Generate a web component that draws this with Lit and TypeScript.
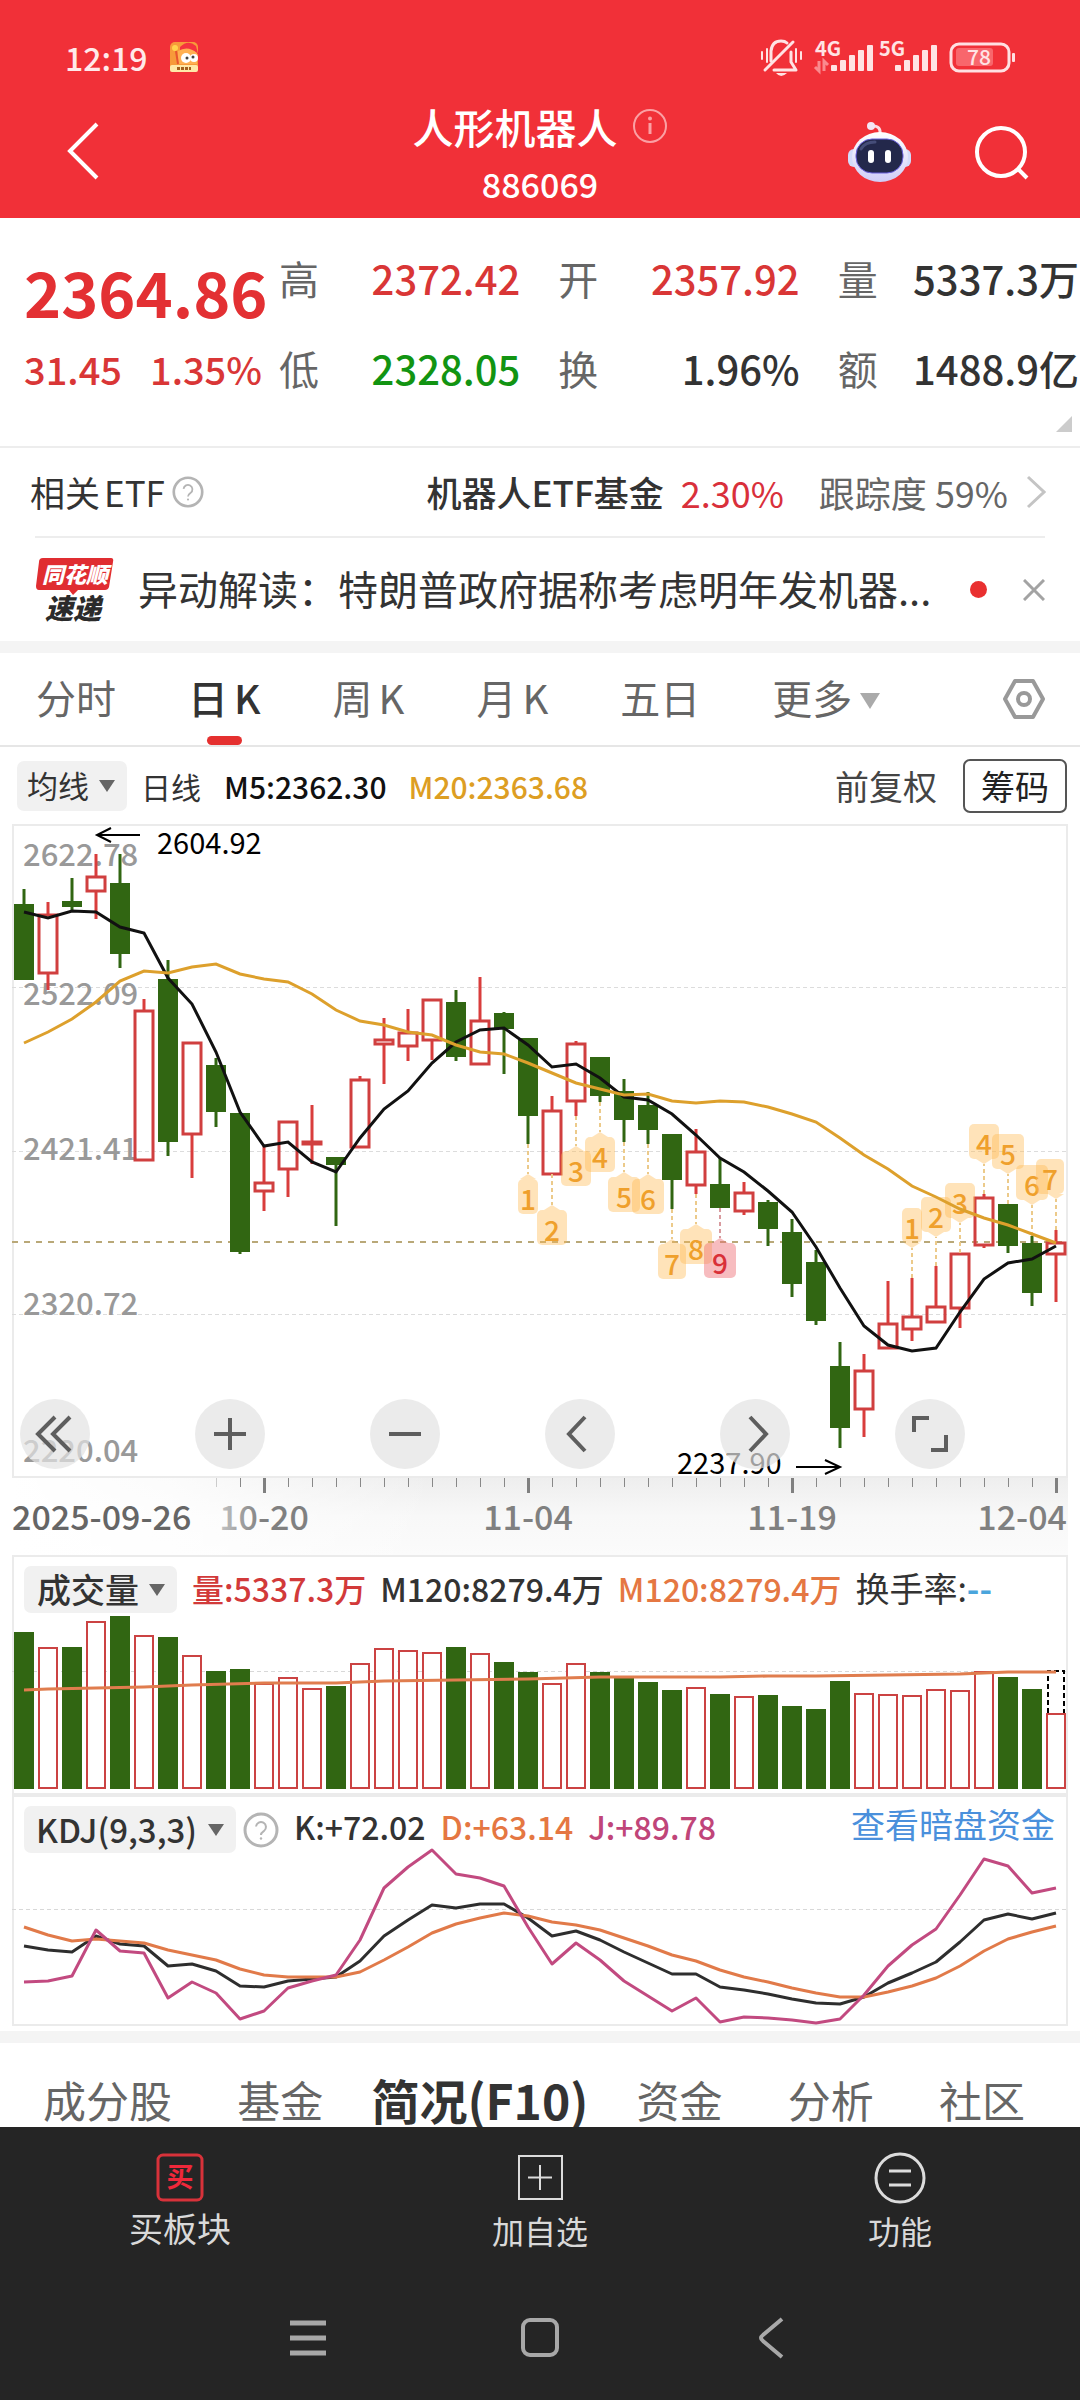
import { LitElement, html, svg, css } from "lit";
import { customElement, property } from "lit/decorators.js";
import { classMap } from "lit/directives/class-map.js";

const FONT = css`"Noto Sans CJK SC", "Noto Sans", sans-serif`;

/** Horizontal distance between two trading days, and the centre of the first one. */
const STEP = 24;
const FIRST = 24;
const dayX = (i: number) => FIRST + i * STEP;

type Candle = [up: 0 | 1, high: number, top: number, bottom: number, low: number];

const candles: Candle[] = [
  [0, 889, 904, 980, 980], [1, 902, 914, 973, 990], [0, 878, 901, 907, 912], [1, 854, 876, 891, 919],
  [0, 854, 883, 954, 968], [1, 999, 1010, 1160, 1160], [0, 960, 979, 1142, 1156], [1, 1042, 1042, 1134, 1178],
  [0, 1058, 1065, 1112, 1127], [0, 1113, 1113, 1252, 1254], [1, 1146, 1182, 1191, 1211], [1, 1121, 1121, 1169, 1197],
  [1, 1105, 1141, 1144, 1164], [0, 1157, 1157, 1165, 1226], [1, 1076, 1079, 1147, 1147], [1, 1018, 1039, 1044, 1084],
  [1, 1009, 1032, 1046, 1061], [1, 999, 999, 1040, 1060], [0, 990, 1002, 1057, 1061], [1, 977, 1020, 1064, 1064],
  [0, 1012, 1013, 1029, 1074], [0, 1038, 1038, 1116, 1144], [1, 1096, 1110, 1174, 1174], [1, 1041, 1043, 1101, 1116],
  [0, 1057, 1057, 1096, 1102], [0, 1079, 1091, 1120, 1142], [0, 1092, 1105, 1130, 1144], [0, 1134, 1134, 1180, 1209],
  [1, 1129, 1151, 1185, 1194], [0, 1158, 1184, 1208, 1208], [1, 1182, 1192, 1211, 1215], [0, 1200, 1202, 1229, 1246],
  [0, 1219, 1232, 1284, 1297], [0, 1250, 1262, 1321, 1325], [0, 1342, 1366, 1428, 1448], [1, 1354, 1370, 1409, 1437],
  [1, 1281, 1323, 1348, 1348], [1, 1278, 1316, 1329, 1341], [1, 1266, 1306, 1322, 1322], [1, 1253, 1253, 1308, 1328],
  [1, 1194, 1197, 1245, 1248], [0, 1204, 1204, 1246, 1253], [0, 1236, 1243, 1293, 1306], [1, 1230, 1242, 1254, 1302],
];

const ma5 = [912, 918, 911, 912, 927, 933, 978, 1004, 1052, 1112, 1146, 1142, 1162, 1172, 1138, 1109, 1091, 1063, 1042, 1030, 1028, 1045, 1067, 1064, 1078, 1097, 1100, 1114, 1135, 1158, 1172, 1191, 1212, 1247, 1288, 1326, 1345, 1351, 1348, 1312, 1279, 1263, 1259, 1246];
const ma20 = [1043, 1032, 1019, 1002, 981, 971, 973, 967, 964, 974, 979, 982, 994, 1010, 1021, 1025, 1032, 1035, 1045, 1052, 1054, 1063, 1073, 1083, 1089, 1095, 1094, 1101, 1103, 1101, 1102, 1107, 1114, 1122, 1138, 1155, 1169, 1186, 1197, 1209, 1218, 1225, 1234, 1243];

/** Numbered turn marks: label, day index, y of the tip, tag width, side of the candle. */
type Mark = { n: number; day: number; tip: number; w: number; below: boolean };
const marks: Mark[] = [
  { n: 1, day: 21, tip: 1174, w: 20, below: true },
  { n: 2, day: 22, tip: 1205, w: 30, below: true },
  { n: 3, day: 23, tip: 1146, w: 30, below: true },
  { n: 4, day: 24, tip: 1132, w: 30, below: true },
  { n: 5, day: 25, tip: 1172, w: 32, below: true },
  { n: 6, day: 26, tip: 1174, w: 32, below: true },
  { n: 7, day: 27, tip: 1239, w: 28, below: true },
  { n: 8, day: 28, tip: 1224, w: 32, below: true },
  { n: 9, day: 29, tip: 1238, w: 32, below: true },
  { n: 1, day: 37, tip: 1248, w: 20, below: false },
  { n: 2, day: 38, tip: 1237, w: 30, below: false },
  { n: 3, day: 39, tip: 1223, w: 30, below: false },
  { n: 4, day: 40, tip: 1164, w: 30, below: false },
  { n: 5, day: 41, tip: 1174, w: 32, below: false },
  { n: 6, day: 42, tip: 1205, w: 32, below: false },
  { n: 7, day: 43, tip: 1199, w: 28, below: false },
];

const volumeTops = [1632, 1647, 1647, 1621, 1616, 1635, 1637, 1655, 1671, 1669, 1683, 1677, 1688, 1686, 1663, 1648, 1650, 1652, 1647, 1653, 1662, 1672, 1683, 1663, 1672, 1677, 1682, 1690, 1687, 1694, 1696, 1695, 1706, 1709, 1681, 1693, 1694, 1695, 1689, 1690, 1671, 1677, 1689, 1713];
const volumeAverage: [number, number][] = [[0, 1690], [1, 1689], [3, 1688], [5, 1687], [7, 1685], [10, 1683], [13, 1683], [15, 1681], [18, 1680], [21, 1679], [24, 1677], [27, 1677], [29, 1677], [31, 1676], [33, 1676], [36, 1675], [39, 1674], [41, 1672], [43, 1672]];

const kLine = [1946, 1950, 1952, 1936, 1944, 1946, 1966, 1964, 1971, 1986, 1987, 1981, 1979, 1977, 1961, 1936, 1920, 1905, 1908, 1904, 1904, 1918, 1936, 1931, 1940, 1952, 1963, 1974, 1974, 1987, 1990, 1994, 1999, 2003, 2004, 1997, 1983, 1973, 1962, 1942, 1920, 1914, 1919, 1913];
const dLine = [1927, 1935, 1941, 1939, 1941, 1943, 1950, 1955, 1960, 1969, 1975, 1977, 1977, 1977, 1972, 1960, 1947, 1933, 1924, 1918, 1913, 1916, 1922, 1925, 1930, 1938, 1946, 1955, 1961, 1970, 1977, 1982, 1988, 1993, 1997, 1997, 1992, 1986, 1978, 1966, 1951, 1939, 1932, 1926];
const jLine = [1982, 1981, 1976, 1930, 1951, 1953, 1998, 1982, 1993, 2019, 2011, 1988, 1981, 1975, 1940, 1888, 1867, 1850, 1874, 1878, 1886, 1927, 1964, 1943, 1960, 1981, 1996, 2011, 1998, 2022, 2017, 2018, 2020, 2023, 2019, 1995, 1966, 1945, 1929, 1895, 1859, 1866, 1893, 1888];

const points = (ys: number[]) => ys.map((y, i) => `${dayX(i)},${y}`).join(" ");

const caret = (w: number, h: number) => html`<svg class="caret" width=${w} height=${h} viewBox="0 0 16 12" preserveAspectRatio="none" aria-hidden="true"><path d="M0 0H16L8 12Z" fill="currentColor" /></svg>`;

const help = (size: number) => html`<svg width=${size} height=${size} viewBox="0 0 36 36" fill="none" stroke="#b4b4b4" stroke-width="3" aria-hidden="true">
  <circle cx="18" cy="18" r="16" /><path d="M13 14.500a5 5 0 1 1 8 4.500c-2 1.400-3 2-3 4" stroke-width="2" /><circle cx="18" cy="26.500" r="1.200" fill="#b4b4b4" stroke="none" /></svg>`;

@customElement("status-bar")
export class StatusBar extends LitElement {
  static styles = css`
    :host { display: block; font-family: ${FONT}; color: #fff; }
    .bar { display: flex; align-items: center; height: 34px; padding: 40px 62px 8px 65px; }
    .time { font-size: 32px; line-height: 34px; font-weight: 500; color: #ffe9ea; }
    .app { margin-left: 22px; }
    .right { margin-left: auto; }
    .signal { font-size: 20px; font-weight: 700; fill: #ffe3e4; }
    svg { display: block; }
  `;

  private signal(label: string, x: number) {
    return svg`<text class="signal" x=${x} y="21">${label}</text>
      ${[0, 1, 2, 3, 4].map((i) => svg`<rect x=${x + 16 + i * 9} y=${30 - i * 5} width="6" height=${6 + i * 5} rx="1" fill="#ffe3e4" />`)}`;
  }

  render() {
    return html`<div class="bar">
      <span class="time">12:19</span>
      <svg class="app" width="28" height="30" viewBox="0 0 28 30" aria-hidden="true">
        <rect width="28" height="30" rx="5" fill="#f79a3a" />
        <path d="M10 5Q18-3 26 4L28 12H10Z" fill="#f5333f" />
        <path d="M8 9Q18 3 27 11V22H8Z" fill="#ffb052" />
        <circle cx="5" cy="6" r="3" fill="#ffd34d" /><path d="M6 9L8 22" stroke="#e8562f" stroke-width="2" />
        <circle cx="16" cy="16" r="5" fill="#fff" /><circle cx="24" cy="16" r="4" fill="#fff" />
        <circle cx="17" cy="16" r="1.500" fill="#444" /><circle cx="23" cy="15" r="1.500" fill="#444" />
        <rect y="23" width="28" height="7" rx="2" fill="#ffe9a8" /><path d="M7 26.500H21" stroke="#a2601e" stroke-width="3" stroke-dasharray="3 1" />
      </svg>
      <svg class="right" width="258" height="56" viewBox="0 -6 258 56" fill="none" role="img" aria-label="静音，4G，5G，电量">
        <g stroke="#ffe3e4" stroke-width="3" stroke-linecap="round" stroke-linejoin="round">
          <path d="M2 17V24M7 14V27M36 14V27M41 17V24" stroke-width="2" />
          <path d="M11 26V16Q12 6 21 6Q25 6 27 8" />
          <path d="M31 17V27L36 35H14" />
          <path d="M5 35L33 7" />
        </g>
        <path d="M16 38H27Q21 44 16 38Z" fill="#ffe3e4" />
        ${this.signal("4G", 55)}
        <path d="M59 26V36L55 32M64 36V26L68 30" stroke="#fa8a8e" stroke-width="3" />
        ${this.signal("5G", 119)}
        <rect x="191" y="9" width="58" height="27" rx="8" stroke="#ffe0e2" stroke-width="3" />
        <rect x="196" y="13" width="37" height="18" rx="3" fill="#f8666c" />
        <text x="219" y="30" text-anchor="middle" font-size="21" font-weight="500" fill="#ffe3e4">78</text>
        <rect x="252" y="18" width="3" height="9" rx="1" fill="#ffe0e2" />
      </svg>
    </div>`;
  }
}

@customElement("title-bar")
export class TitleBar extends LitElement {
  static styles = css`
    :host { display: block; font-family: ${FONT}; color: #fff; }
    .bar { display: grid; grid-template-columns: 1fr auto 1fr; align-items: center; height: 136px; padding: 0 46px; box-sizing: border-box; }
    button { background: none; border: 0; padding: 0; color: inherit; display: block; }
    .back { margin-left: 10px; }
    .mid { display: flex; flex-direction: column; align-items: center; padding-top: 8px; }
    h1 { margin: 0; font-size: 41px; line-height: 60px; font-weight: 500; display: flex; align-items: center; gap: 14px; }
    .code { font-size: 34px; line-height: 56px; font-weight: 500; }
    .side { display: flex; justify-content: flex-end; align-items: center; gap: 59px; padding-top: 4px; }
    svg { display: block; }
  `;

  render() {
    return html`<div class="bar">
      <button class="back" aria-label="返回"><svg width="54" height="60" viewBox="0 0 54 60"><path d="M41 4L14 31L41 58" fill="none" stroke="#fff" stroke-width="4" /></svg></button>
      <div class="mid">
        <h1><span>人形机器人</span><button aria-label="说明"><svg width="36" height="36" viewBox="0 0 36 36" fill="none" stroke="#fba0a4" stroke-width="2">
          <circle cx="18" cy="18" r="16" /><path d="M18 15V26" stroke-width="3" /><circle cx="18" cy="10.500" r="1" /></svg></button></h1>
        <span class="code">886069</span>
      </div>
      <div class="side">
        <button aria-label="智能助手"><svg width="66" height="62" viewBox="0 0 66 62">
          <defs><linearGradient id="shell" x1="0" y1="0" x2="0" y2="1"><stop offset="0" stop-color="#fff" /><stop offset="1" stop-color="#cfcdf7" /></linearGradient></defs>
          <path d="M33 13Q34 5 26 5" fill="none" stroke="#fbdde6" stroke-width="3" /><circle cx="24" cy="5" r="4" fill="#f4e6f5" />
          <rect x="1" y="28" width="12" height="18" rx="6" fill="#d3dbfa" /><rect x="52" y="28" width="12" height="18" rx="6" fill="#d3dbfa" />
          <ellipse cx="33" cy="36" rx="28" ry="25" fill="url(#shell)" />
          <rect x="9" y="18" width="47" height="34" rx="16" fill="#23284b" stroke="#6a61dd" stroke-width="1" />
          <path d="M14 28Q18 21 28 21" stroke="#454d78" stroke-width="3" fill="none" stroke-linecap="round" />
          <rect x="21" y="29" width="6" height="13" rx="3" fill="#fff" /><rect x="38" y="29" width="6" height="13" rx="3" fill="#fff" />
        </svg></button>
        <button aria-label="搜索"><svg width="62" height="62" viewBox="0 0 62 62" fill="none" stroke="#fff" stroke-width="4"><circle cx="29" cy="31" r="24" /><path d="M45 47L55 57" /></svg></button>
      </div>
    </div>`;
  }
}

@customElement("quote-panel")
export class QuotePanel extends LitElement {
  static styles = css`
    :host { display: block; font-family: ${FONT}; color: #333; }
    .panel { display: grid; grid-template-columns: 217px repeat(3, 1fr); column-gap: 38px; height: 230px; box-sizing: border-box; padding: 30px 1px 0 24px; border-bottom: 2px solid #ededed; position: relative; }
    .price { font-size: 63px; line-height: 76px; font-weight: 700; color: #e33033; padding-top: 5px; white-space: nowrap; }
    .moves { display: flex; gap: 28px; font-size: 38px; line-height: 54px; font-weight: 500; color: #d93636; padding-top: 13px; white-space: nowrap; }
    dl { margin: 0; display: flex; flex-direction: column; gap: 30px; }
    .pair { display: flex; justify-content: space-between; align-items: center; line-height: 60px; white-space: nowrap; }
    dt { font-size: 40px; color: #666; }
    dd { margin: 0; font-size: 40px; font-weight: 500; }
    .red { color: #d93636; }
    .green { color: #129412; }
    .corner { position: absolute; right: 8px; bottom: 14px; width: 16px; height: 16px; background: #ccc; clip-path: polygon(100% 0, 100% 100%, 0 100%); }
  `;

  private pair(label: string, value: string, tone = "") {
    return html`<div class="pair"><dt>${label}</dt><dd class=${tone}>${value}</dd></div>`;
  }

  render() {
    return html`<div class="panel">
      <div><div class="price">2364.86</div><div class="moves"><span>31.45</span><span>1.35%</span></div></div>
      <dl>${this.pair("高", "2372.42", "red")}${this.pair("低", "2328.05", "green")}</dl>
      <dl>${this.pair("开", "2357.92", "red")}${this.pair("换", "1.96%")}</dl>
      <dl>${this.pair("量", "5337.3万")}${this.pair("额", "1488.9亿")}</dl>
      <span class="corner"></span>
    </div>`;
  }
}

@customElement("info-rows")
export class InfoRows extends LitElement {
  static styles = css`
    :host { display: block; font-family: ${FONT}; color: #333; }
    svg { display: block; flex: none; }
    a { color: inherit; text-decoration: none; }
    .etf { display: flex; align-items: center; height: 88px; padding: 0 34px 0 30px; font-size: 35px; line-height: 52px; white-space: nowrap; }
    .etf svg { margin-left: 7px; }
    .name { margin-left: auto; font-weight: 500; }
    .rate { margin-left: 17px; font-size: 36px; color: #d9303b; }
    .track { margin-left: 35px; font-size: 36px; color: #666; }
    .etf .next { margin-left: 18px; }
    .latin { margin-left: 4px; }
    .news { display: flex; align-items: center; height: 105px; margin: 0 35px; border-top: 2px solid #ededed; box-sizing: border-box; }
    .headline { flex: 1; min-width: 0; margin-left: 24px; padding-bottom: 4px; font-size: 40px; line-height: 60px; white-space: nowrap; }
    .dot { width: 17px; height: 17px; border-radius: 50%; background: #e93030; margin-right: 36px; }
    button { background: none; border: 0; padding: 0; }
    .strip { height: 12px; background: #f4f4f4; }
    .brand { font-weight: 900; font-style: italic; }
  `;

  render() {
    return html`
      <a class="etf" href="#etf">
        <span>相关<span class="latin">ETF</span></span>${help(32)}
        <span class="name">机器人ETF基金</span><span class="rate">2.30%</span><span class="track">跟踪度 59%</span>
        <svg class="next" width="20" height="34" viewBox="0 0 20 34"><path d="M2 2L18 17L2 32" fill="none" stroke="#c4c4c4" stroke-width="3" /></svg>
      </a>
      <div class="news">
        <svg width="79" height="86" viewBox="0 -10 79 86">
          <path d="M8 1H76Q79 1 78 5L74 30Q73 33 70 33H43L38 38L34 33H4Q1 33 1 29L4 5Q4 1 8 1Z" fill="#e02d31" />
          <text class="brand" x="40" y="26" text-anchor="middle" font-size="22" fill="#fff">同花顺</text>
          <text class="brand" x="38" y="62" text-anchor="middle" font-size="28" fill="#2b2b2b">速递</text>
        </svg>
        <a class="headline" href="#news">异动解读：特朗普政府据称考虑明年发机器...</a>
        <span class="dot"></span>
        <button aria-label="关闭"><svg width="22" height="22" viewBox="0 0 22 22"><path d="M1 1L21 21M21 1L1 21" stroke="#a3a3a3" stroke-width="3" /></svg></button>
      </div>
      <div class="strip"></div>`;
  }
}

@customElement("period-tabs")
export class PeriodTabs extends LitElement {
  @property() active = "日K";

  static styles = css`
    :host { display: block; font-family: ${FONT}; }
    .tabs { display: flex; align-items: center; height: 94px; padding: 0 34px 0 36px; box-sizing: border-box; border-bottom: 2px solid #e6e6e6; gap: 72px; }
    button { background: none; border: 0; padding: 0 0 4px; font: inherit; font-size: 40px; line-height: 88px; color: #666; white-space: nowrap; position: relative; }
    .on { color: #333; font-weight: 500; }
    .on::after { content: ""; position: absolute; left: 50%; bottom: 0; width: 35px; height: 9px; margin-left: -17px; border-radius: 5px; background: #e5302f; }
    .k { margin-left: 6px; }
    .caret { margin-left: 8px; color: #aaa; vertical-align: 5px; }
    .set { margin-left: auto; padding: 0; line-height: 0; }
  `;

  render() {
    const names = ["分时", "日K", "周K", "月K", "五日"];
    return html`<nav class="tabs">
      ${names.map((n) => html`<button class=${classMap({ on: n === this.active })}>${n.endsWith("K") ? html`${n[0]}<span class="k">K</span>` : n}</button>`)}
      <button>更多${caret(20, 16)}</button>
      <button class="set" aria-label="设置"><svg width="44" height="42" viewBox="0 0 44 42" fill="none" stroke="#999" stroke-width="4" stroke-linejoin="round"><path d="M13 3H31L41 21L31 39H13L3 21Z" /><circle cx="22" cy="21" r="6" /></svg></button>
    </nav>`;
  }
}

@customElement("picker-box")
export class PickerBox extends LitElement {
  @property() text = "";
  @property() label = "";

  static styles = css`
    :host { display: inline-block; font-family: ${FONT}; }
    .box { display: inline-flex; align-items: center; background: #f1f1f1; border-radius: 7px; height: var(--box-height, 47px); color: #666; padding-right: 12px; gap: 10px; }
    select { appearance: none; border: 0; background: none; margin: 0; padding: 0 0 2px var(--box-pad, 13px); font: inherit; font-size: var(--box-font, 34px); line-height: 46px; color: #333; }
    .caret { display: block; flex: none; }
  `;

  render() {
    return html`<label class="box"><select aria-label=${this.label}><option>${this.text}</option></select>${caret(16, 12)}</label>`;
  }
}

@customElement("price-chart")
export class PriceChart extends LitElement {
  static styles = css`
    :host { display: block; font-family: ${FONT}; }
    .head { display: flex; align-items: center; height: 77px; padding: 0 13px 0 17px; font-size: 30px; white-space: nowrap; color: #333; }
    .head picker-box { --box-height: 50px; --box-font: 31px; --box-pad: 10px; }
    .day { margin-left: 14px; }
    .ma5 { margin-left: 23px; font-weight: 500; color: #111; }
    .ma20 { margin-left: 22px; font-weight: 500; color: #dd9e23; }
    .adjust { margin-left: auto; background: none; border: 0; padding: 0; font: inherit; font-size: 34px; color: #444; }
    .chips { margin-left: 26px; height: 54px; padding: 0 16px; border: 2px solid #555; border-radius: 7px; background: #fff; font: inherit; font-size: 34px; line-height: 48px; color: #222; }
    .stage { position: relative; margin: 0 12px; }
    svg { display: block; }
    .plot { width: 100%; height: auto; box-shadow: inset 0 0 0 2px #ebebeb; }
    .scale { font-size: 31px; fill: #999; font-weight: 500; }
    .tag { font-size: 28px; font-weight: 500; text-anchor: middle; }
    .extreme { font-size: 29px; fill: #000; font-weight: 400; }
    .tools { position: absolute; left: 8px; bottom: 9px; display: flex; gap: 105px; }
    .tools button { width: 70px; height: 70px; border: 0; padding: 0; border-radius: 50%; background: rgba(227, 227, 227, 0.7); }
    .axis { margin: 0 12px; }
    .date { font-size: 34px; font-weight: 500; fill: #808080; }
    .start { fill: #666; }
    .faded { fill: url(#fade); }
  `;

  private tool(label: string, d: string) {
    return html`<button aria-label=${label}><svg width="70" height="70" viewBox="0 0 70 70" fill="none" stroke="#5e5e5e" stroke-width="4"><path d=${d} /></svg></button>`;
  }

  private candle([up, high, top, bottom, low]: Candle, i: number) {
    const x = dayX(i);
    return up
      ? svg`<path d="M${x} ${high}V${top}M${x} ${bottom}V${low}" stroke="#d93d3c" stroke-width="3" />
          <rect x=${x - 9} y=${top + 1} width="18" height=${Math.max(bottom - top - 1, 1)} fill="none" stroke="#d03f3f" stroke-width="3" />`
      : svg`<path d="M${x} ${high}V${low}" stroke="#316612" stroke-width="3" />
          <rect x=${x - 10} y=${top} width="20" height=${bottom - top} fill="#316612" />`;
  }

  private mark({ n, day, tip, w, below }: Mark) {
    const x = dayX(day);
    const [, high, , , low] = candles[day];
    const red = n === 9;
    const boxY = below ? tip + 5 : tip - 40;
    const cx = n === 7 && !below ? x - 6 : x;
    const arrow = below ? `M${x - 8} ${tip + 5}L${x} ${tip}L${x + 8} ${tip + 5}Z` : `M${x - 8} ${tip - 5}L${x} ${tip}L${x + 8} ${tip - 5}Z`;
    return svg`<path d="M${x} ${below ? low : high}V${tip}" stroke=${red ? "#d89a9e" : "#ecca8a"} stroke-width="2" stroke-dasharray="4 3" />
      <g fill=${red ? "#ee6a70" : "#ffb851"} fill-opacity=${red ? 0.45 : 0.4}><rect x=${cx - w / 2} y=${boxY} width=${w} height="35" rx="5" /><path d=${arrow} /></g>
      <text class="tag" x=${cx} y=${boxY + 31} fill=${red ? "#d93038" : "#efa02c"}>${n}</text>`;
  }

  render() {
    const scale: [string, number][] = [["2622.78", 866], ["2522.09", 1005], ["2421.41", 1160], ["2320.72", 1315], ["2220.04", 1462]];
    const ticks = Array.from({ length: 36 }, (_, i) => 216 + i * STEP);
    return html`
      <div class="head">
        <picker-box text="均线" label="指标"></picker-box>
        <span class="day">日线</span><span class="ma5">M5:2362.30</span><span class="ma20">M20:2363.68</span>
        <button class="adjust">前复权</button><button class="chips">筹码</button>
      </div>
      <div class="stage">
        <svg class="plot" viewBox="12 824 1056 654" role="img" aria-label="日K线">
          <g stroke="#dcdcdc" stroke-width="1" stroke-dasharray="4 3"><path d="M12 987.500H1066M12 1151.500H1066M12 1314.500H1066" /></g>
          <path d="M12 1242H1066" stroke="#b9a878" stroke-width="2" stroke-dasharray="6 6" />
          ${scale.map(([t, y]) => svg`<text class="scale" x="23" y=${y}>${t}</text>`)}
          ${candles.map((c, i) => this.candle(c, i))}
          ${marks.map((m) => this.mark(m))}
          <polyline points=${points(ma5)} fill="none" stroke="#111" stroke-width="3" />
          <polyline points=${points(ma20)} fill="none" stroke="#dda02c" stroke-width="3" />
          <g fill="none" stroke="#000" stroke-width="2"><path d="M140 835H97M111 828L97 835L111 842" /><path d="M796 1467H840M825 1460L840 1467L825 1474" /></g>
          <text class="extreme" x="157" y="854">2604.92</text>
          <text class="extreme" x="677" y="1474">2237.90</text>
        </svg>
        <div class="tools">
          ${this.tool("收起", "M35 18L18 35L35 52M50 18L33 35L50 52")}
          ${this.tool("放大", "M35 19V51M19 35H51")}
          ${this.tool("缩小", "M19 35H51")}
          ${this.tool("左移", "M40 18L24 35L40 52")}
          ${this.tool("右移", "M30 18L46 35L30 52")}
          ${this.tool("全屏", "M19 33V19H34M36 51H51V36")}
        </div>
      </div>
      <div class="axis">
        <svg viewBox="12 1478 1056 77" width="100%" role="img" aria-label="日期">
          <defs>
            <linearGradient id="down" x1="0" y1="0" x2="0" y2="1"><stop offset="0" stop-color="#eee" /><stop offset="0.500" stop-color="#f8f8f8" /><stop offset="1" stop-color="#fbfbfb" /></linearGradient>
            <linearGradient id="side" x1="0" y1="0" x2="1" y2="0"><stop offset="0" stop-color="#fff" /><stop offset="0.150" stop-color="#fff" stop-opacity="0.800" /><stop offset="0.400" stop-color="#fff" stop-opacity="0" /></linearGradient>
            <linearGradient id="fade" gradientUnits="userSpaceOnUse" x1="216" y1="0" x2="262" y2="0"><stop offset="0" stop-color="#c8c8c8" /><stop offset="1" stop-color="#808080" /></linearGradient>
          </defs>
          <rect x="12" y="1478" width="1056" height="77" fill="url(#down)" />
          <rect x="12" y="1478" width="1056" height="77" fill="url(#side)" />
          ${ticks.map((x) => (x % 264 === 0 ? svg`<rect x=${x - 1} y="1478" width="3" height="15" fill="#808080" />` : svg`<rect x=${x} y="1478" width="1" height="9" fill=${x === 216 ? "#ccc" : "#888"} />`))}
          <text class="date start" x="12" y="1530">2025-09-26</text>
          <text class="date faded" x="264" y="1530" text-anchor="middle">10-20</text>
          <text class="date" x="528" y="1530" text-anchor="middle">11-04</text>
          <text class="date" x="792" y="1530" text-anchor="middle">11-19</text>
          <text class="date" x="1067" y="1530" text-anchor="end">12-04</text>
        </svg>
      </div>`;
  }
}

@customElement("indicator-charts")
export class IndicatorCharts extends LitElement {
  static styles = css`
    :host { display: block; font-family: ${FONT}; }
    .panel { margin: 0 12px; box-shadow: inset 0 0 0 2px #ebebeb; }
    .head { display: flex; align-items: center; height: 47px; padding: 11px 13px 0 12px; font-size: 32px; line-height: 40px; font-weight: 500; white-space: nowrap; color: #333; }
    .figures { display: flex; gap: 14px; margin-left: 15px; padding-bottom: 4px; }
    .kdj { gap: 15px; margin-left: 15px; padding-bottom: 8px; }
    .kdj-box { --box-font: 33px; --box-pad: 12px; }
    .red { color: #d23a3a; }
    .orange { color: #e57742; }
    .pink { color: #c04579; }
    .blue { color: #4aa5dc; font-weight: 700; }
    .turn { font-size: 34px; font-weight: 400; }
    .help { margin-left: 7px; }
    .link { margin-left: auto; padding-bottom: 12px; font-size: 34px; font-weight: 400; color: #4a90dc; text-decoration: none; }
    svg { display: block; overflow: visible; }
    .plot { width: 100%; height: auto; }
  `;

  render() {
    return html`
      <div class="panel">
        <div class="head">
          <picker-box text="成交量" label="副图指标"></picker-box>
          <div class="figures"><span class="red">量:5337.3万</span><span>M120:8279.4万</span><span class="orange">M120:8279.4万</span><span class="turn">换手率:<span class="blue">--</span></span></div>
        </div>
        <svg class="plot" viewBox="12 1613 1056 182" role="img" aria-label="成交量">
          <path d="M12 1671.500H1066" stroke="#d8d8d8" stroke-dasharray="4 3" />
          ${volumeTops.map((y, i) => candles[i][0]
            ? svg`<rect x=${dayX(i) - 9} y=${y + 1} width="18" height=${1788 - y - 1} fill="#fff" stroke="#cb4343" stroke-width="2" />`
            : svg`<rect x=${dayX(i) - 10} y=${y} width="20" height=${1789 - y} fill="#316612" />`)}
          <path d="M1048 1713V1671H1064V1713" fill="none" stroke="#000" stroke-width="2" stroke-dasharray="5 3" />
          <polyline points=${volumeAverage.map(([i, y]) => `${dayX(i)},${y}`).join(" ")} fill="none" stroke="#e07d4e" stroke-width="3" />
        </svg>
      </div>
      <div class="panel">
        <div class="head">
          <picker-box class="kdj-box" text="KDJ(9,3,3)" label="副图指标"></picker-box>
          <span class="help">${help(36)}</span>
          <div class="figures kdj"><span>K:+72.02</span><span class="orange">D:+63.14</span><span class="pink">J:+89.78</span></div>
          <a class="link" href="#funds">查看暗盘资金</a>
        </div>
        <svg class="plot" viewBox="12 1853 1056 173" role="img" aria-label="KDJ">
          <path d="M12 1909.500H1066" stroke="#d8d8d8" stroke-dasharray="4 3" />
          <g fill="none" stroke-width="3" stroke-linejoin="round">
            <polyline points=${points(kLine)} stroke="#2e2e2e" />
            <polyline points=${points(dLine)} stroke="#e17a49" />
            <polyline points=${points(jLine)} stroke="#c24a80" />
          </g>
        </svg>
      </div>`;
  }
}

@customElement("bottom-area")
export class BottomArea extends LitElement {
  static styles = css`
    :host { display: flex; flex-direction: column; flex: 1; font-family: ${FONT}; }
    svg { display: block; }
    .strip { height: 12px; margin-top: 5px; background: #f4f4f4; }
    .tabs { display: flex; align-items: flex-end; justify-content: space-between; height: 84px; padding: 0 55px 0 43px; box-sizing: border-box; }
    .tabs button { background: none; border: 0; padding: 0; font: inherit; font-size: 43px; line-height: 56px; color: #666; white-space: nowrap; }
    .tabs .on { font-size: 48px; font-weight: 700; color: #333; margin: 0 -17px; }
    .dock { flex: 1; background: #252525; color: #d9d9d9; }
    .actions { display: grid; grid-template-columns: repeat(3, 1fr); padding-top: 25px; }
    .actions button { background: none; border: 0; padding: 0; font: inherit; font-size: 32px; line-height: 50px; color: inherit; display: flex; flex-direction: column; align-items: center; gap: 1px; }
    .actions .buy { font-size: 34px; line-height: 46px; }
    .system { display: grid; grid-template-columns: 186px 278px 186px; justify-content: center; justify-items: center; padding: 61px 0 38px; }
    .system button { background: none; border: 0; padding: 0; }
  `;

  render() {
    return html`
      <div class="strip"></div>
      <nav class="tabs">
        <button>成分股</button><button>基金</button><button class="on">简况(F10)</button><button>资金</button><button>分析</button><button>社区</button>
      </nav>
      <div class="dock">
        <div class="actions">
          <button class="buy"><svg width="52" height="52" viewBox="0 0 52 52" aria-hidden="true"><rect x="4" y="3" width="44" height="45" rx="5" fill="none" stroke="#d8323a" stroke-width="3" /><text x="26" y="35" text-anchor="middle" font-size="27" font-weight="700" fill="#f0283a">买</text></svg>买板块</button>
          <button><svg width="52" height="52" viewBox="0 0 52 52" fill="none" stroke="#dcdcdc" stroke-width="2" aria-hidden="true"><rect x="5" y="4" width="43" height="43" /><path d="M26 13V38M14 25.500H38" /></svg>加自选</button>
          <button><svg width="52" height="52" viewBox="0 0 52 52" fill="none" stroke="#dcdcdc" stroke-width="3" aria-hidden="true"><circle cx="26" cy="26" r="24" /><path d="M15 19H37M15 33H37" /></svg>功能</button>
        </div>
        <div class="system">
          <button aria-label="最近任务"><svg width="44" height="44" viewBox="0 0 44 44" stroke="#a8a8a8" stroke-width="5"><path d="M4 7H40M4 22H40M4 37H40" /></svg></button>
          <button aria-label="主屏幕"><svg width="44" height="44" viewBox="0 0 44 44"><rect x="5" y="4" width="34" height="35" rx="7" fill="none" stroke="#a8a8a8" stroke-width="4" /></svg></button>
          <button aria-label="返回"><svg width="44" height="44" viewBox="0 0 44 44"><path d="M32 3L13 19Q9 22 13 25L32 41" fill="none" stroke="#a8a8a8" stroke-width="4" /></svg></button>
        </div>
      </div>`;
  }
}

@customElement("app-root")
export class AppRoot extends LitElement {
  static styles = css`
    :host { display: flex; flex-direction: column; min-height: 100vh; background: #fff; }
    .top { background: #f13038; }
  `;

  render() {
    return html`
      <header class="top"><status-bar></status-bar><title-bar></title-bar></header>
      <quote-panel></quote-panel>
      <info-rows></info-rows>
      <period-tabs></period-tabs>
      <price-chart></price-chart>
      <indicator-charts></indicator-charts>
      <bottom-area></bottom-area>`;
  }
}
